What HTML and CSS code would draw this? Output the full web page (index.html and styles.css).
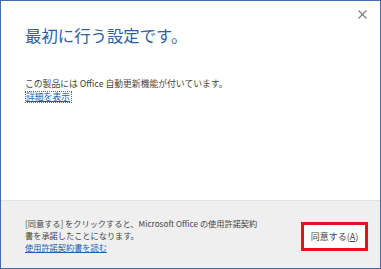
FILE: index.html
```html
<!DOCTYPE html>
<html lang="ja">
<head>
    <meta charset="UTF-8">
    <title>Office</title>
    <link rel="stylesheet" href="styles.css">
</head>
<body>
    <div class="dialog">
        <!-- 本文 -->
        <main class="dialog-body">
            <button class="close" aria-label="閉じる">
                <svg width="9" height="9" viewBox="0 0 9 9">
                    <path d="M0.5 0.5L8.5 8.5M8.5 0.5L0.5 8.5" stroke="#7a7a7a" stroke-width="1.1"/>
                </svg>
            </button>
            <h1 class="title">最初に行う設定です。</h1>
            <p class="info">この製品には Office 自動更新機能が付いています。</p>
            <a class="more" href="#">詳細を表示</a>
        </main>

        <!-- フッター -->
        <footer class="dialog-footer">
            <div class="notice">
                <p>[同意する] をクリックすると、Microsoft Office の使用許諾契約<br>書を承諾したことになります。</p>
                <a href="#">使用許諾契約書を読む</a>
            </div>
            <div class="accept-mark">
                <button class="accept">同意する(<u>A</u>)</button>
            </div>
        </footer>
    </div>
</body>
</html>
```

FILE: styles.css
```css
:root {
    --frame-blue: #3f6db0;
    --title-blue: #2f5f9f;
    --link-blue: #1f5fa8;
    --text: #444;
    --footer-bg: #efefef;
    --mark-red: #e8101e;
}

* {
    margin: 0;
    padding: 0;
    box-sizing: border-box;
}

body {
    background: #fff;
    font-family: "Noto Sans CJK JP", "Noto Sans", sans-serif;
    color: var(--text);
}

.dialog {
    width: 381px;
    height: 269px;
    border: 1px solid var(--frame-blue);
    display: flex;
    flex-direction: column;
    background: #fff;
}

/* ========== 本文 ========== */
.dialog-body {
    position: relative;
    flex: 1;
    padding: 23px 24px 0;
}

.close {
    position: absolute;
    top: 9px;
    right: 13px;
    width: 9px;
    height: 9px;
    border: none;
    background: none;
    display: block;
}

.close svg {
    display: block;
}

.title {
    font-size: 16.4px;
    font-weight: normal;
    line-height: 22px;
    color: var(--title-blue);
}

.info {
    margin-top: 32px;
    font-size: 8.8px;
    line-height: 12px;
}

.more {
    display: block;
    width: fit-content;
    margin-top: 1px;
    font-size: 8.8px;
    line-height: 10px;
    color: var(--link-blue);
    border: 1px dotted #666;
    padding: 0 1px 0 0;
}

/* ========== フッター ========== */
.dialog-footer {
    height: 68px;
    background: var(--footer-bg);
    border-top: 1px solid #e2e2e2;
    display: flex;
    align-items: flex-start;
    padding: 16px 12px 0 24px;
}

.notice {
    flex: 1;
    font-size: 8.2px;
    line-height: 12px;
}

.notice a {
    color: var(--link-blue);
}

.accept-mark {
    border: 3px solid var(--mark-red);
    background: #fff;
    width: 67px;
    height: 29px;
    display: flex;
    align-items: center;
    justify-content: center;
    margin-top: 5px;
}

.accept {
    border: none;
    background: none;
    font-family: inherit;
    font-size: 9px;
    color: var(--text);
}
```
